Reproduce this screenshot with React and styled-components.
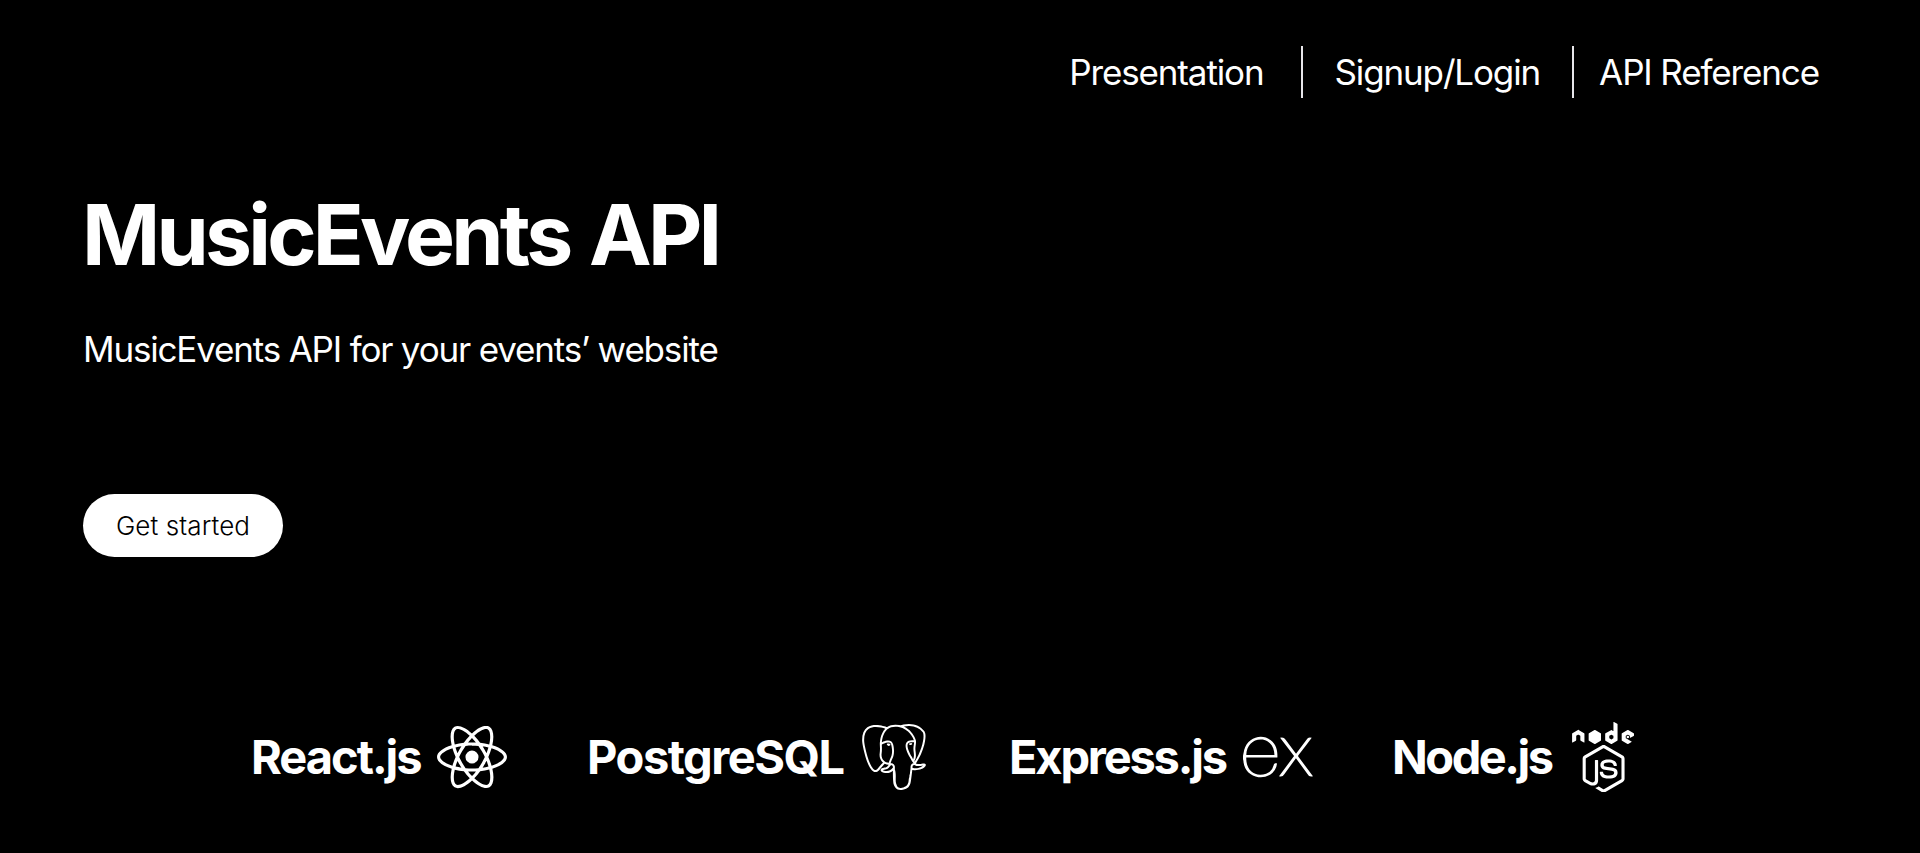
import React from "react";
import styled, { createGlobalStyle } from "styled-components";
import { SiExpress, SiPostgresql, SiReact } from "react-icons/si";
import { DiNodejs, DiNodejsSmall } from "react-icons/di";

const GlobalStyle = createGlobalStyle`
  *, *::before, *::after { box-sizing: border-box; }
  body { margin: 0; background: #000; color: #fff; font-family: Inter, "Liberation Sans", sans-serif; }
`;
const Page = styled.div`
  height: 853px;
  overflow: hidden;
  display: flex;
  flex-direction: column;
  background: #000;
`;
const Nav = styled.nav`
  display: flex;
  justify-content: flex-end;
  align-items: center;
  height: 52px;
  margin-top: 46px;
  padding-right: 101px;
`;
const NavLink = styled.a`
  color: #fff;
  font-size: 35px;
  line-height: 52px;
  letter-spacing: -1.13px;
  white-space: nowrap;
  text-decoration: none;
`;
const Divider = styled.span`
  width: 2px;
  height: 52px;
  background: #e7e6ea;
  margin: 0 ${(p) => p.$right}px 0 ${(p) => p.$left}px;
`;
const Hero = styled.main`
  display: flex;
  flex-direction: column;
  align-items: flex-start;
  padding: 86px 0 0 83px;
`;
const Title = styled.h1`
  margin: 0 0 0 -1px;
  font-size: 84px;
  font-weight: 700;
  line-height: 102px;
  letter-spacing: -3.8px;
  word-spacing: 3.5px;
  white-space: nowrap;
`;
const Subtitle = styled.p`
  margin: 42px 0 0;
  font-size: 35px;
  line-height: 42px;
  letter-spacing: -1.18px;
  white-space: nowrap;
`;
const StartButton = styled.button`
  width: 200px;
  height: 63px;
  margin-top: 124px;
  padding: 0;
  border: 0;
  border-radius: 32px;
  background: #fff;
  color: #000;
  font: 300 26px/63px Inter, sans-serif;
  letter-spacing: 0.1px;
`;
const Stack = styled.section`
  display: flex;
  align-items: center;
  height: 80px;
  margin-top: 160px;
  padding-left: 251px;
`;
const Tech = styled.div`
  display: flex;
  align-items: center;
  margin-right: ${(p) => p.$after || 0}px;
  svg { flex: none; }
`;
const TechName = styled.span`
  width: ${(p) => p.$width}px;
  font-size: 47px;
  font-weight: 700;
  line-height: 56px;
  letter-spacing: ${(p) => p.$tracking}px;
  white-space: nowrap;
`;

const NodeLogo = () => (
  <svg width="62" height="70" viewBox="0 0 62 70" fill="#fff">
    <DiNodejs size={80.6} x={-0.9} y={-30} />
    <DiNodejsSmall size={60} x={1.6} y={16.2} />
  </svg>
);

export default function App() {
  return (
    <Page>
      <GlobalStyle />
      <Nav>
        <NavLink>Presentation</NavLink>
        <Divider $left={38} $right={31} />
        <NavLink>Signup/Login</NavLink>
        <Divider $left={32} $right={25} />
        <NavLink>API Reference</NavLink>
      </Nav>
      <Hero>
        <Title>MusicEvents API</Title>
        <Subtitle>MusicEvents API for your events’ website</Subtitle>
        <StartButton>Get started</StartButton>
      </Hero>
      <Stack>
        <Tech $after={80}>
          <TechName $width={186} $tracking={-2}>React.js</TechName>
          <SiReact size={70} />
        </Tech>
        <Tech $after={82}>
          <TechName $width={274} $tracking={-1.5}>PostgreSQL</TechName>
          <SiPostgresql size={66} />
        </Tech>
        <Tech $after={79}>
          <TechName $width={234} $tracking={-2.2}>Express.js</TechName>
          <SiExpress size={70} />
        </Tech>
        <Tech>
          <TechName $width={180} $tracking={-2.5}>Node.js</TechName>
          <NodeLogo />
        </Tech>
      </Stack>
    </Page>
  );
}
